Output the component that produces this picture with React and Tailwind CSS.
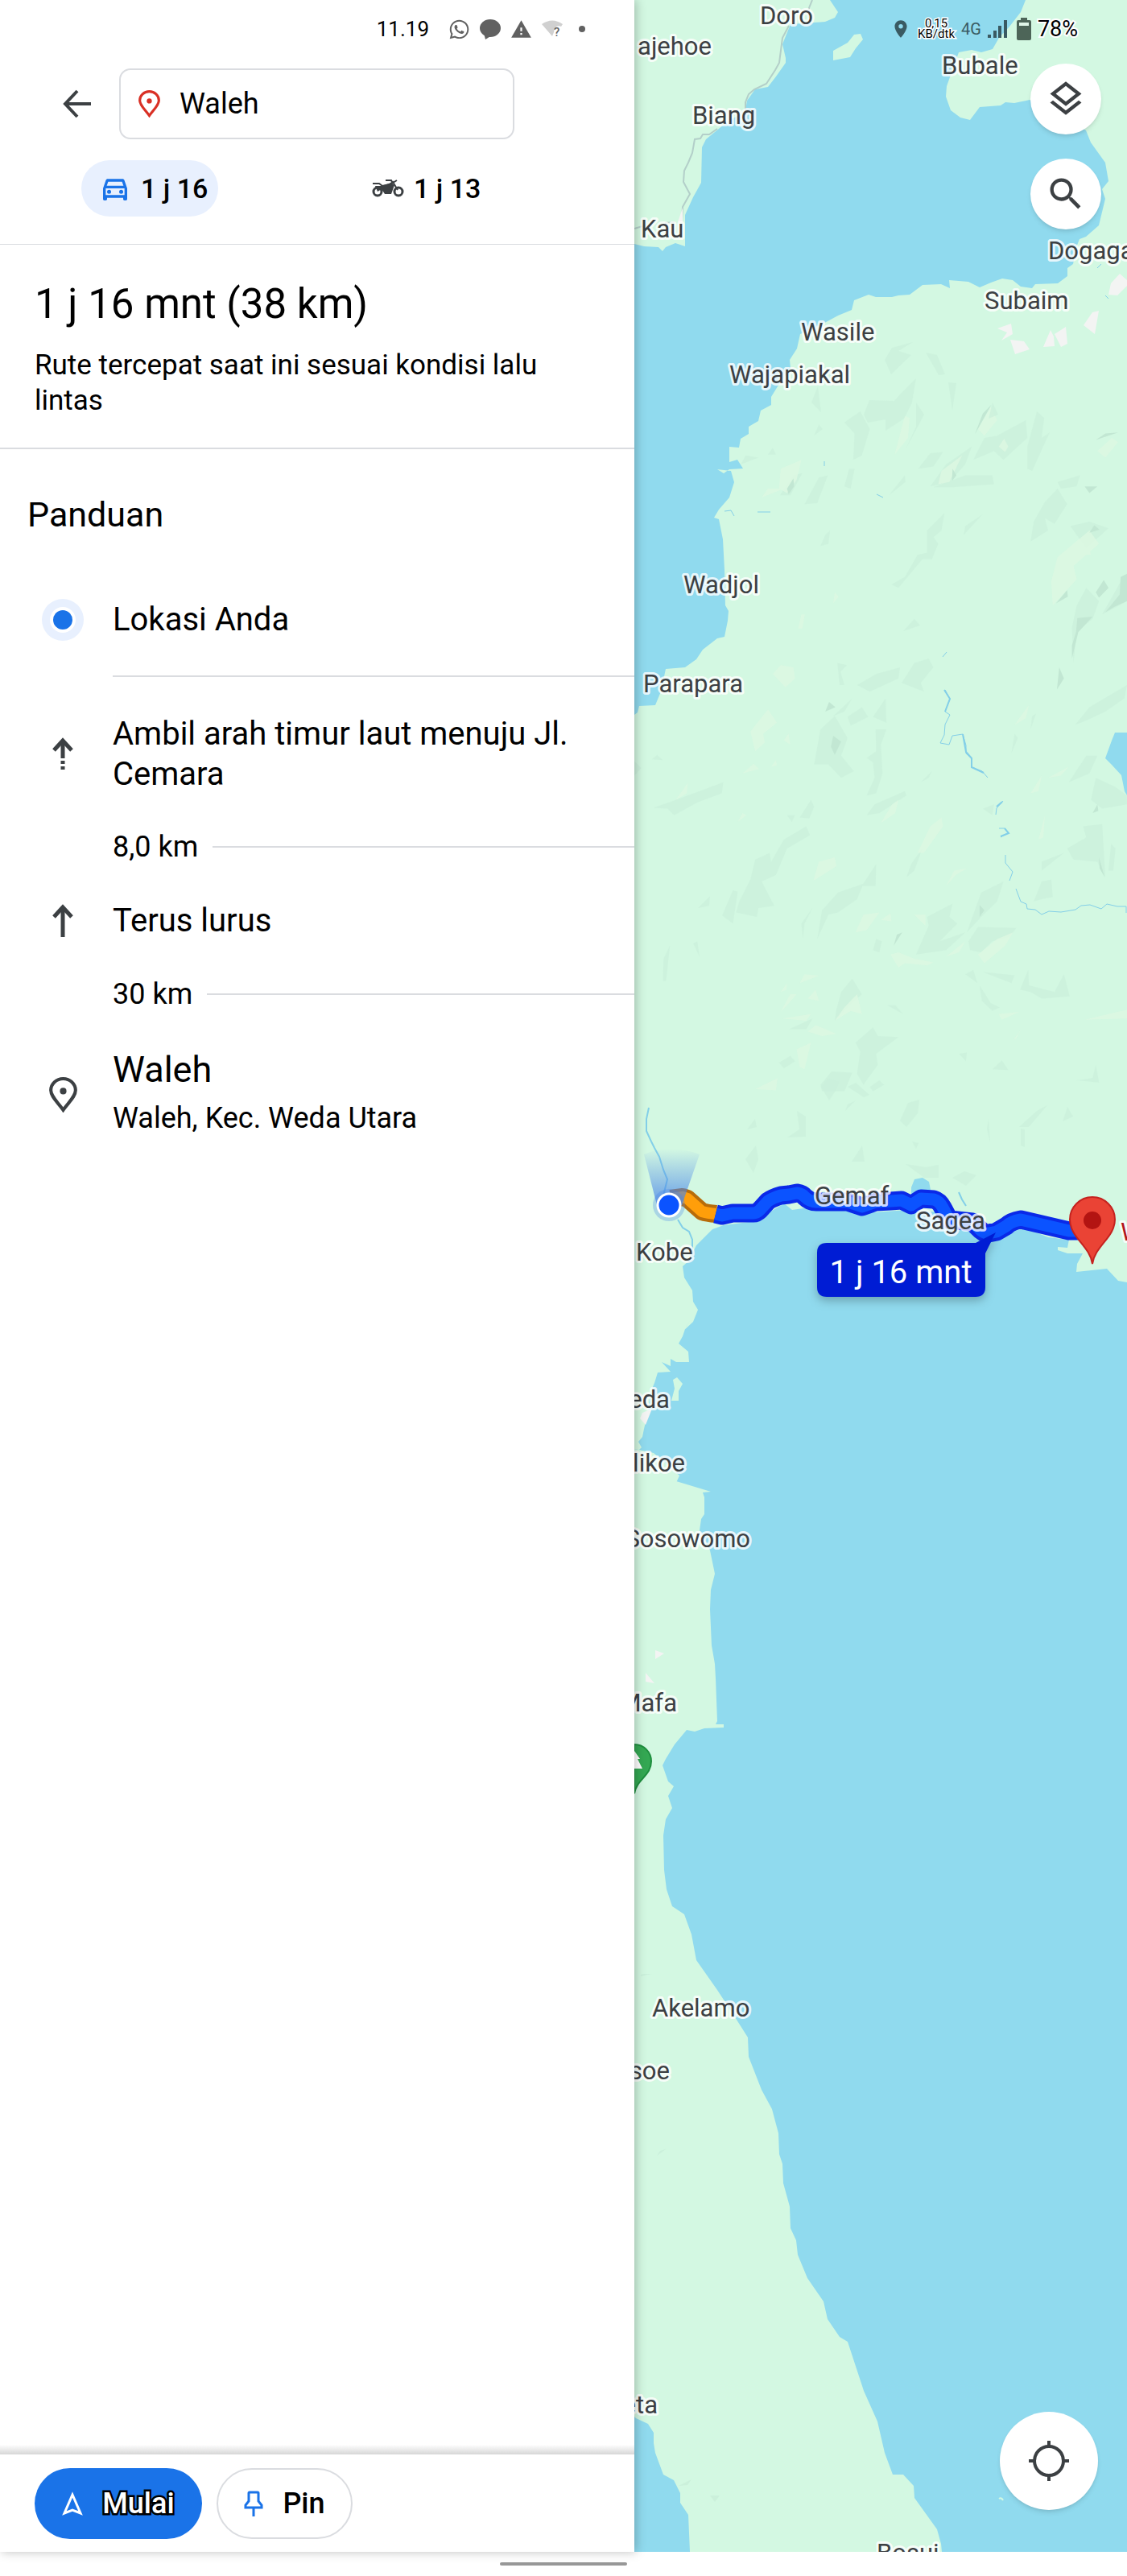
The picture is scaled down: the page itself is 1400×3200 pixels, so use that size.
import { useState } from "react";
import { MdOutlineDirectionsCar, MdOutlineLayers, MdSearch, MdWarning, MdLocationOn } from "react-icons/md";
import { FaWhatsapp } from "react-icons/fa";

const labels = [
  { name: "Doro", x: 156, y: 30 },
  { name: "ajehoe", x: 96, y: 68, end: true },
  { name: "Biang", x: 72, y: 154 },
  { name: "Kau", x: 8, y: 295 },
  { name: "Bubale", x: 382, y: 92 },
  { name: "Dogaga", x: 514, y: 322 },
  { name: "Subaim", x: 435, y: 384 },
  { name: "Wasile", x: 207, y: 423 },
  { name: "Wajapiakal", x: 118, y: 476 },
  { name: "Wadjol", x: 61, y: 737 },
  { name: "Parapara", x: 11, y: 860 },
  { name: "Gemaf", x: 224, y: 1496 },
  { name: "Sagea", x: 350, y: 1527 },
  { name: "Kobe", x: 2, y: 1566 },
  { name: "eda", x: 44, y: 1749, end: true },
  { name: "likoe", x: 63, y: 1828, end: true },
  { name: "Sosowomo", x: 144, y: 1922, end: true },
  { name: "Mafa", x: 53, y: 2126, end: true },
  { name: "Akelamo", x: 22, y: 2505 },
  { name: "soe", x: 44, y: 2583, end: true },
  { name: "eta", x: 29, y: 2998, end: true },
  { name: "Bosui", x: 301, y: 3182 },
];

const ROUTE =
  "M101 1508L109 1510L122 1507L148 1507Q152 1507 156 1503L166 1492Q172 1488 182 1485L192 1484L202 1482Q209 1483 212 1487Q218 1493 226 1493L265 1493L283 1499L300 1493L318 1492L332 1491L344 1497L356 1489L372 1490Q379 1492 383 1500L391 1515L420 1518L426 1524Q434 1533 440 1532L450 1530L462 1523Q468 1517 480 1515L540 1529L555 1529";

function PlacePin({ className }) {
  return (
    <svg viewBox="0 0 34 43" className={className} fill="none" stroke="currentColor" strokeWidth="4">
      <path d="M17 40C11 31 2 24 2 16A15 14 0 0 1 32 16C32 24 23 31 17 40Z" />
      <circle cx="17" cy="17" r="4" fill="currentColor" stroke="none" />
    </svg>
  );
}

function Motorcycle() {
  return (
    <svg viewBox="0 0 40 24" className="h-6 w-10" fill="none" stroke="#3c4043">
      <circle cx="7" cy="16" r="5" strokeWidth="3" />
      <circle cx="33" cy="16" r="5" strokeWidth="3" />
      <path d="M1 6H9L13 9L22 7L26 4L32 14" strokeWidth="2" />
      <path d="M12 9L24 5L28 8L24 19H16L12 13L7 16L4 9Z" fill="#3c4043" stroke="none" />
      <path d="M17 2H24L26 6M26 5L31 2" strokeWidth="2" />
    </svg>
  );
}

function UpArrow({ dashed }) {
  return (
    <svg viewBox="0 0 28 42" className="h-[42px] w-7" fill="none" stroke="#3c4043" strokeWidth="5">
      <path d="M3 16L14 4L25 16" />
      {dashed ? <path d="M14 4V26M14 29V33M14 36V40" /> : <path d="M14 4V41" />}
    </svg>
  );
}

function StatusLeft() {
  return (
    <div className="flex h-9 items-center justify-end pr-[61px] text-[#616161]">
      <time className="mr-6 text-[26px] leading-9 text-black">11.19</time>
      <FaWhatsapp className="mr-3 size-[27px]" />
      <svg viewBox="0 0 26 26" className="mr-3 size-[26px]" fill="currentColor">
        <ellipse cx="13" cy="12" rx="13" ry="11" />
        <path d="M5 18L7 26L15 21Z" />
      </svg>
      <MdWarning className="mr-3 size-[27px]" />
      <svg viewBox="0 0 26 26" className="mr-5 size-[26px]">
        <path d="M0 7Q13-2 26 7L24 10Q17 7 15 17L13 22Z" fill="#d0d0d0" />
        <text x="15" y="22" className="fill-[#616161] text-[15px] font-medium">?</text>
      </svg>
      <span className="size-2 rounded-full bg-[#616161]" />
    </div>
  );
}

function StatusRight() {
  return (
    <div className="flex h-9 items-center justify-end pr-[61px] text-[#3a5a62]">
      <MdLocationOn className="mr-2 size-[26px]" />
      <div className="mr-2 text-center text-[15px] leading-[13px] text-black [paint-order:stroke] [-webkit-text-stroke:3px_white]">
        <p>0,15</p>
        <p>KB/dtk</p>
      </div>
      <span className="mr-2 text-[20px]">4G</span>
      <svg viewBox="0 0 24 22" className="mr-3 h-[22px] w-6" fill="currentColor">
        <path d="M0 18H4V22H0ZM7 13H11V22H7ZM13 7H17V22H13ZM20 0H24V22H20Z" />
      </svg>
      <svg viewBox="0 0 18 28" className="mr-2 h-7 w-[18px]">
        <path d="M5 0H13V3H16Q18 3 18 5V26Q18 28 16 28H2Q0 28 0 26V5Q0 3 2 3H5Z" fill="#4d6558" />
        <path d="M3 6H15V10H3Z" fill="#e0f5e8" />
      </svg>
      <span className="text-[27px] leading-9 text-black [paint-order:stroke] [-webkit-text-stroke:4px_white]">78%</span>
    </div>
  );
}

function Terrain() {
  return (
    <g>
      {/* shaded slopes */}
      <g fill="#cbf0db" fillOpacity="0.7" transform="translate(-8 500) scale(.3954 .5485)">
        <path d="M680 45L730 20L760 60L735 120L708 130L712 70ZM585 75L600 50L612 60ZM355 140L370 120L410 125ZM440 118L455 103L465 118ZM478 210L520 165L548 160L510 210ZM555 230L600 170L628 165L595 228ZM680 190L695 150L712 150L700 195Z" />
        <path d="M912 150L950 115L990 112L960 145ZM950 190L1000 140L1040 120L1080 100L1060 140L1010 180ZM1085 130L1120 80L1160 75L1250 40L1255 80L1180 130L1150 110ZM1255 100L1285 20L1308 35L1300 80L1325 68L1270 155L1255 150ZM960 192L1060 165L1145 165L1150 185L1020 192ZM820 210L870 165L872 180Z" />
        <path d="M1275 270L1310 225L1350 195L1380 230L1340 275L1310 262L1320 290L1265 315ZM1055 300L1060 280L1115 253ZM940 290L995 250L985 290L960 305L975 320L955 355L925 355L850 420L828 412L870 395L910 345L940 340ZM605 325L620 300L635 290L630 320ZM1350 180L1420 165L1410 190L1360 195ZM1390 280L1450 270L1510 285L1440 330Z" />
        <path d="M865 518L900 490L918 505ZM860 635L900 590L945 580L960 600L920 635L930 655ZM658 590L688 595L668 610L680 640L665 640ZM720 640L780 615L855 600L850 625L760 655ZM770 712L810 670L812 725ZM645 710L705 670L680 700ZM605 740L650 710L690 760L670 800L710 835L670 850L630 820L585 820ZM690 712L735 690L755 712L700 732ZM778 740L812 740L795 775L800 840L780 885L750 890L775 850L770 815L750 805L780 790Z" />
        <path d="M80 918L150 900L300 860L295 885L220 905L145 935L125 920ZM75 808L92 798L110 810ZM20 812L42 828L20 845ZM500 935L525 935L515 950ZM540 940L575 900L585 915L570 942ZM385 1080L400 1035L445 1020L450 1040L490 990L560 960L572 980L500 1010L465 1070L420 1085L460 1140L410 1145L405 1165L340 1155L350 1130ZM296 1162L330 1105L345 1108L330 1180Z" />
        <path d="M595 1215L610 1150L660 1110L740 1090L720 1125L660 1155L630 1160ZM545 1180L580 1145L555 1180L550 1215ZM770 1240L780 1215L798 1220L790 1245ZM905 1250L945 1185L940 1165L1020 1135L1010 1165L1035 1180L980 1220L1060 1200L1000 1240ZM750 935L775 910L870 880L875 890L790 930ZM735 1095L780 1045L778 1095ZM875 1075L890 1045L925 1010L900 1060Z" />
        <path d="M1065 1200L1110 1110L1180 1085L1160 1130L1110 1165ZM1070 1220L1100 1188L1220 1190L1200 1210L1145 1220L1110 1245L1075 1240ZM1380 1010L1440 985L1430 960L1490 955L1500 1075L1475 1040L1400 1035ZM1510 1060L1518 1000L1532 1010L1525 1060ZM1300 1040L1370 1020L1300 1060ZM1275 1130L1300 1085L1330 1080L1335 1120L1300 1125Z" />
        <path d="M1385 860L1440 800L1475 800L1450 840ZM1405 730L1450 690L1568 640L1560 670L1500 700L1440 720ZM1400 590L1395 510L1410 460L1440 420L1480 450L1460 490L1410 520ZM1490 480L1560 390L1568 450ZM1455 900L1470 850L1530 870L1568 890V910L1490 920Z" />
        <path d="M655 1375L670 1335L705 1305L735 1340L690 1370L650 1400ZM715 1450L770 1415L785 1435L850 1437L780 1475L785 1500L740 1545L720 1520L730 1470ZM605 1545L640 1515L705 1518L680 1560H610ZM475 1495L510 1480L525 1492L490 1508ZM1232 1330L1258 1285L1260 1320L1340 1335L1370 1295L1388 1345L1300 1350L1265 1335ZM1105 1320L1140 1360L1168 1370L1145 1378L1112 1355ZM1060 1295L1085 1285L1098 1315ZM505 1420L580 1395L560 1420ZM1145 1510L1175 1490L1195 1512ZM1040 1475L1065 1472L1062 1492ZM1410 1535L1460 1530L1470 1500L1480 1540ZM110 1310L112 1260L132 1230L120 1310ZM205 1225L218 1220L225 1255ZM760 1550L790 1535L805 1545L770 1560Z" />
        <path d="M1205 795L1215 750L1225 760ZM1265 740L1270 710L1282 705ZM220 1145L258 1118L255 1140ZM920 860L955 835L945 850ZM1115 920L1150 910L1145 935ZM815 1365L840 1365L865 1385ZM1115 1290L1215 1297L1205 1315Z" />
      </g>
      {/* sunlit slopes */}
      <g fill="#ddf8e2" fillOpacity="0.8" transform="translate(-8 500) scale(.3954 .5485)">
        <path d="M475 195L480 150L545 130L530 175L500 205ZM838 118L870 30L885 35L880 80ZM1100 60L1140 10L1160 40L1120 75ZM1165 100L1182 82L1195 100L1185 112ZM975 185L985 155L1050 120L1010 180ZM420 215L440 195L490 195ZM1475 110L1520 80L1540 90L1500 125ZM1330 405L1350 350L1450 290L1480 320L1400 370L1410 400L1335 460ZM1400 345L1440 310L1455 345Z" />
        <path d="M455 615L480 595L520 600L525 625L495 645ZM385 745L440 695L468 725L425 750L430 770L400 790ZM360 840L395 818L412 830ZM450 825L465 810L468 822ZM535 512L545 480L556 480L548 512ZM645 455L650 430L662 440ZM150 900L188 862L185 885ZM345 950L360 930L372 935ZM490 765L505 750L510 775Z" />
        <path d="M910 1020L950 960L985 940L990 960L930 1020ZM795 952L830 910L850 900L840 930ZM583 1082L600 1040L650 1030L655 1050L590 1080ZM715 1200L740 1160L790 1155L750 1195ZM825 1250L850 1245L900 1260L960 1268L940 1275L870 1270L850 1280ZM1100 1250L1160 1215L1210 1200L1185 1230L1120 1270ZM1000 1095L1025 1060L1065 1055L1030 1070ZM795 1172L825 1157L828 1175ZM900 1160L935 1160L935 1185ZM1000 1255L1060 1220L1040 1245Z" />
        <path d="M650 1400L680 1370L720 1340L735 1385L700 1378ZM540 1315L555 1295L600 1298ZM480 1380L510 1340L530 1340L500 1365ZM485 1395L575 1385L560 1400ZM565 1350L590 1330L600 1355ZM565 1425L590 1410L655 1430L610 1435ZM530 1465L575 1450L555 1510L540 1505ZM400 1555L470 1530L465 1558ZM1165 1385L1230 1380L1175 1398ZM1435 1398L1568 1375V1395ZM1210 1445L1235 1420L1220 1440ZM480 1335L500 1315L498 1330ZM1290 990L1310 935L1305 985ZM1265 885L1300 845L1290 880ZM1320 850L1385 825L1360 845ZM1215 730L1260 685L1250 715Z" />
      </g>
      <g fill="#c2e7d3" transform="translate(-8 500) scale(.3954 .5485)">
        <path d="M500 195L520 172L522 190L505 208ZM1090 72L1115 25L1142 5ZM1018 178L1020 150L1032 165ZM1470 85L1500 70L1540 68ZM1435 190L1475 190L1450 205ZM1450 295L1465 278L1482 288ZM1470 430L1495 402L1510 420L1480 442ZM1408 520L1412 488L1460 485L1415 520L1395 580L1395 550ZM1500 475L1545 435L1548 395L1568 388V450L1530 462ZM620 700L632 678L652 690ZM638 780L645 755L670 768L650 798ZM1348 650L1355 600L1370 625ZM1460 930L1475 910L1478 925ZM1480 1030L1498 1075L1482 1055ZM835 1230L845 1205L862 1200ZM1105 1165L1105 1138L1120 1150ZM1345 455L1380 425L1382 440Z" />
      </g>
      <g fill="#cbf0db" fillOpacity="0.7">
        <path d="M311 447L320 432L346 425L328 436L344 441L319 465ZM362 438L376 441L386 465L378 466ZM312 510L330 490L350 470L345 500L335 520L312 535ZM337 558L350 530L350 500L360 515ZM220 500L228 480L232 512ZM285 515L292 497L322 498L318 520L290 525ZM390 475L400 476L395 510ZM440 520L445 500L452 515Z" />
        <path d="M232 1350L240 1340L255 1343L250 1355L242 1367ZM265 1350L275 1345L292 1360L285 1363ZM330 1392L340 1370L354 1366L352 1383L338 1400ZM202 1380L213 1387L213 1412L190 1413L205 1403ZM140 1403L150 1390L152 1400ZM138 1440L151 1423L154 1440L148 1457ZM270 1443L283 1423L286 1443ZM337 1446L362 1450L378 1447L378 1463L360 1463ZM395 1463L410 1455L425 1460L412 1473ZM478 1400L500 1380L513 1373L490 1400ZM538 1375L545 1387L532 1393ZM262 1380L275 1367L265 1372ZM438 1402L440 1390L442 1420ZM480 1402L485 1403V1425L480 1423ZM345 1418L353 1420L350 1427Z" />
      </g>
      <path d="M8 2453L12 2452H22L8 2455ZM55 3088L71 3080L66 3087ZM94 3100H106L100 3108ZM28 2678L40 2669L32 2672Z" fill="#cbf0db" />
    </g>
  );
}

function RouteMap() {
  return (
    <svg
      viewBox="0 0 612 3170"
      preserveAspectRatio="xMinYMin slice"
      className="absolute inset-0 size-full"
      role="img"
      aria-label="Peta rute ke Waleh"
    >
      <defs>
        <linearGradient id="beam" x1="0" y1="1" x2="0" y2="0">
          <stop offset="0" stopColor="#4a86e8" stopOpacity="0.8" />
          <stop offset="1" stopColor="#4a86e8" stopOpacity="0" />
        </linearGradient>
        <filter id="lift" x="-20%" y="-20%" width="140%" height="160%">
          <feDropShadow dx="0" dy="5" stdDeviation="6" floodOpacity="0.25" />
        </filter>
      </defs>
      <rect width="612" height="3170" fill="#90daee" />

      <g fill="#d3f8e2">
        <path d="M0 0H243L253 15L249 22L237 27L223 28L194 30L184 55L188 72V78L176 95L166 108L150 111L140 125L138 137L111 155L89 173L84 183L83 227L73 245L63 267V306L51 302L39 307L35 312L30 307L12 306L0 303Z" />
        <path d="M273 43L281 42L284 49L275 60L268 71L247 75V63L265 53Z" />
        <path d="M612 0H486L480 15L466 33L453 47L445 61L431 65L419 62L403 65L393 93L388 107L387 120L393 137L405 146L417 149L429 133L455 131L461 127L472 128L491 124L526 143L561 162L567 177L585 202L589 225L581 235L585 247L577 280L561 294L553 297L549 307L545 328L538 333V343L526 352L498 353L494 358L480 356L470 348L457 346L443 351L429 357L415 350L391 348L392 358L381 353L358 354L346 363L342 366L328 367L320 369H300L291 366L273 373L270 385L253 392L229 405L206 415L202 433L193 447L194 458L178 480L170 493V503L157 510L154 523L142 530V539L132 545L130 556L118 555V574L128 571L135 582L118 583L111 588L103 583L120 585L124 599L118 618L105 633L99 643L105 645L110 670L112 708L113 752L117 759L116 771L112 791L103 793L85 807L77 819L63 829L39 831L33 859L26 876L6 877L4 885L0 888V1840H52L95 1853L85 1854L87 1860V1881L83 1887L81 1901L94 1926L100 1955L95 1975L94 1999L96 2044L100 2067L101 2085L103 2138L101 2142H111V2146L87 2147L75 2151L65 2149L50 2167L39 2185L35 2193L42 2213L49 2219L42 2231L47 2246L39 2260L36 2280L37 2323L40 2347L47 2368L62 2378L71 2403L77 2435L103 2472L122 2501L141 2531L142 2555L158 2596L171 2620L179 2650L180 2676L184 2688L185 2712L193 2741L194 2768L201 2783L203 2801L215 2830L235 2859L240 2881L255 2903L265 2909L285 2970L302 3008L311 3047L321 3074H334L347 3088L348 3103L376 3142L381 3160L382 3170H69L67 3124L57 3109V3097L49 3081L36 3074L26 3047L24 3035V3022L17 3011L2 3004L0 3002V1840L0 1800L24 1805L5 1802L9 1798L5 1791L10 1785L12 1775L17 1754L20 1730L25 1718L29 1705L45 1704L34 1692L45 1697V1688L52 1692L68 1692L67 1679L55 1669L60 1660L64 1648L70 1640L59 1655L73 1642L79 1627L73 1617L72 1603L62 1587L60 1573L67 1567L77 1547L87 1537L97 1527L111 1522L150 1517L166 1507L186 1495L196 1503L217 1500H265L283 1507L340 1503L393 1507L411 1525L435 1537L459 1530L480 1523L514 1537L540 1540L538 1550L526 1549V1553L538 1557H557L550 1570L549 1580L587 1576L601 1591L612 1593Z" />
        <path d="M48 1714L53 1711L60 1719L55 1728V1740H46L50 1725Z" />
        <path d="M0 1800L24 1805L40 1818L56 1833L52 1842H0Z" />
      </g>
      <path d="M453 3104Q456 3102 458 3106" fill="none" stroke="#d3f8e2" strokeWidth="2" />
      <Terrain />

      {/* lakes and rivers */}
      <g fill="#90daee">
        <path d="M612 910H597L593 920L585 942L593 950L605 963L609 983L612 988Z" />
        <path d="M344 1475L348 1465L358 1463L366 1468L368 1478L352 1485L344 1490Z" />
      </g>
      <g fill="none" stroke="#83cfe8" strokeWidth="2">
        <path d="M386 857L392 868L386 884L392 888L386 900L385 913L380 923L391 925L395 914L408 912L412 926V936L419 942V953L432 958L439 966M449 1012L450 1004L458 995M455 1040L465 1034L460 1029H453M461 1062V1072L470 1083L466 1094M474 1104L480 1120L487 1123L488 1129L498 1130L506 1136L515 1132L530 1133L548 1130L555 1125L566 1124L580 1129L587 1123L600 1126H611V1134" strokeWidth="1" />
        <path d="M385 857L392 868L386 884M408 912L412 934L419 942V953L434 960M450 1002L457 996M455 1039L465 1035L460 1029" />
        <path d="M18 1376L15 1390V1405L21 1418L25 1426L31 1437L36 1453L41 1465L36 1485M54 1515L60 1525L68 1530L72 1540V1560M403 1481L407 1490L412 1498" />
        <path d="M112 635L120 634L124 641M153 636H169M236 579V573M301 614L309 618M575 333L580 328M585 367L589 371M383 816L388 810" strokeWidth="1" />
      </g>
      <g fill="none" stroke="#b3cfc9" strokeWidth="2">
        <path d="M221 0L217 10V22M192 32L184 47L180 78L175 87L164 104L149 111L142 117L138 127V137M103 160L93 167H85L82 172L75 173L72 190L67 202L62 212L61 226L69 241L60 257L59 275M50 276L38 277M10 281L0 284" />
      </g>
      <g fill="#f3f4f3">
        <path d="M60 258L54 276H60ZM603 340L612 348V355L600 367L589 366L592 352ZM569 388L577 386L572 415L558 404ZM451 408L468 402L470 415L456 423L463 413ZM467 422L484 424L491 434L473 440ZM508 431L517 410L521 418L522 430ZM522 415L536 406L538 427L530 431Z" />
        <path d="M10 1755L22 1750L14 1770L7 1762ZM26 2050L37 2054L26 2061ZM14 2078L25 2091L14 2089Z" />
      </g>

      {/* route */}
      <g fill="none" strokeLinejoin="round">
        <path d="M45 1489L60 1487L66 1489L84 1505Q90 1507 102 1508" stroke="#b86c0a" strokeWidth="22" />
        <path d="M45 1489L60 1487L66 1489L84 1505Q90 1507 103 1508" stroke="#ff9e0a" strokeWidth="14" />
        <path d={ROUTE} stroke="#0a29e8" strokeWidth="23" />
        <path d={ROUTE} stroke="#0b53ff" strokeWidth="15" />
      </g>
      <path d="M28 1497L12 1434Q44 1420 81 1434L59 1497Z" fill="url(#beam)" />
      <circle cx="43" cy="1497" r="20" fill="#4a86e8" fillOpacity="0.3" />
      <circle cx="43" cy="1497" r="14" fill="#0b53ff" stroke="#fff" strokeWidth="3" />

      <g className="fill-[#3c4043] text-[31px]" stroke="#fff" strokeOpacity="0.8" strokeWidth="6" strokeLinejoin="round" paintOrder="stroke">
        {labels.map((l) => (
          <text key={l.name} x={l.x} y={l.y} textAnchor={l.end ? "end" : "start"}>
            {l.name}
          </text>
        ))}
        <text x="604" y="1541" className="fill-[#b3141b]">Waleh</text>
      </g>

      <g filter="url(#lift)">
        <path d="M239 1544H424L449 1531L436 1557V1599Q436 1611 424 1611H239Q227 1611 227 1599V1556Q227 1544 239 1544Z" fill="#041fd4" />
      </g>
      <text x="331" y="1594" textAnchor="middle" className="fill-white text-[40px]">1 j 16 mnt</text>

      <path d="M569 1570C566 1548 541 1537 541 1515A28 28 0 0 1 597 1515C597 1537 572 1548 569 1570Z" fill="#ea4335" stroke="#c5221f" strokeWidth="2" />
      <circle cx="569" cy="1516" r="11" fill="#b31412" />

      <path d="M0 2228C3 2210 21 2206 21 2188A21 21 0 0 0 0 2167Z" fill="#34a853" stroke="#1e8e3e" strokeWidth="2" />
      <path d="M0 2175L7 2185H4L10 2197H0Z" fill="#fff" />
    </svg>
  );
}

function Distance({ children }) {
  return (
    <div className="flex h-[50px] items-center gap-[18px] pl-[140px]">
      <span className="text-[36px] leading-[50px]">{children}</span>
      <span className="h-0.5 flex-1 bg-[#dadce0]" />
    </div>
  );
}

function Step({ icon, children }) {
  return (
    <div className="flex items-center">
      <span className="flex w-[140px] shrink-0 items-center pl-[52px]">
        <span className="flex w-[52px] justify-center">{icon}</span>
      </span>
      <div className="pr-14 text-[40px] leading-[50px]">{children}</div>
    </div>
  );
}

export default function App() {
  const [destination, setDestination] = useState("Waleh");

  return (
    <div className="flex min-h-screen flex-col bg-white font-['Roboto',sans-serif] text-black">
      <main className="flex flex-1">
        <section className="relative z-10 flex min-w-0 flex-[788] flex-col bg-white shadow-[2px_0_12px_rgba(0,0,0,0.25)]">
          <header className="border-b border-[#dadce0] pt-[18px] pb-[34px]">
            <StatusLeft />
            <div className="mt-[31px] flex items-center pl-[76px]">
              <button aria-label="Kembali" className="mr-8">
                <svg viewBox="0 0 40 40" className="size-10" fill="none" stroke="#3c4043" strokeWidth="4">
                  <path d="M37 20H6M20 4L5 20L20 36" />
                </svg>
              </button>
              <label className="mr-[149px] flex h-[88px] min-w-0 flex-1 items-center rounded-[14px] border-2 border-[#dadce0] pl-[22px]">
                <PlacePin className="mr-6 h-[34px] w-[27px] shrink-0 text-[#d93025]" />
                <input
                  aria-label="Tujuan"
                  className="w-full min-w-0 bg-transparent text-[36px] outline-none"
                  value={destination}
                  onChange={(e) => setDestination(e.target.value)}
                />
              </label>
            </div>
            <nav className="mt-[26px] flex h-[70px] items-center pl-[101px] text-[34px] font-medium">
              <button className="mr-[191px] flex h-[70px] w-[170px] items-center gap-3 rounded-full bg-[#e8f0fe] pl-[22px]">
                <MdOutlineDirectionsCar className="size-10 text-[#1a73e8]" />
                1 j 16
              </button>
              <button className="flex items-center gap-3">
                <Motorcycle />
                1 j 13
              </button>
            </nav>
          </header>

          <div className="border-b-2 border-[#dadce0] px-[43px] pt-10 pb-9">
            <h1 className="text-[51px] leading-[68px]">1 j 16 mnt (38 km)</h1>
            <p className="mt-5 text-[35px] leading-11">Rute tercepat saat ini sesuai kondisi lalu lintas</p>
          </div>

          <h2 className="mt-14 pl-[34px] text-[43px] leading-[50px]">Panduan</h2>

          <div className="mt-20">
            <Step
              icon={
                <span className="flex size-[52px] items-center justify-center rounded-full bg-[#e8f0fe]">
                  <span className="size-8 rounded-full border-4 border-white bg-[#1a73e8]" />
                </span>
              }
            >
              Lokasi Anda
            </Step>
            <div className="mt-[43px] ml-[140px] h-0.5 bg-[#dadce0]" />
            <div className="mt-[46px]">
              <Step icon={<UpArrow dashed />}>Ambil arah timur laut menuju Jl. Cemara</Step>
            </div>
            <div className="mt-10">
              <Distance>8,0 km</Distance>
            </div>
            <div className="mt-[42px]">
              <Step icon={<UpArrow />}>Terus lurus</Step>
            </div>
            <div className="mt-[41px]">
              <Distance>30 km</Distance>
            </div>
            <div className="mt-10">
              <Step icon={<PlacePin className="h-11 w-[35px] text-[#3c4043]" />}>
                <p className="text-[45px] leading-[58px]">Waleh</p>
                <p className="text-[36px] leading-[62px]">Waleh, Kec. Weda Utara</p>
              </Step>
            </div>
          </div>

          <div className="mt-auto h-3 bg-linear-to-b from-white to-[#d6d6d6]" />
          <footer className="flex gap-[18px] px-[43px] pt-[17px] pb-4 text-[36px] font-medium">
            <button className="flex h-[88px] w-[208px] items-center justify-center gap-6 rounded-full bg-[#1a73e8] text-white">
              <svg viewBox="0 0 26 32" className="h-8 w-[26px]" fill="none" stroke="currentColor" strokeWidth="3">
                <path d="M13 5L23 28L13 24L3 28Z" />
              </svg>
              <span className="[paint-order:stroke] [-webkit-text-stroke:5px_black]">Mulai</span>
            </button>
            <button className="flex h-[88px] w-[169px] items-center justify-center gap-6 rounded-full border-2 border-[#dadce0]">
              <svg viewBox="0 0 24 32" className="h-8 w-6" fill="none" stroke="#1a73e8" strokeWidth="3">
                <path d="M7 2H17Q18 2 18 3V13L22 18V21H2V18L6 13V3Q6 2 7 2ZM12 21V32" />
              </svg>
              Pin
            </button>
          </footer>
        </section>

        <section className="relative min-w-0 flex-[612] overflow-hidden">
          <RouteMap />
          <div className="absolute inset-0 flex flex-col pt-[18px]">
            <StatusRight />
            <div className="mt-[25px] flex flex-1 flex-col items-end pr-8 pb-[52px]">
              <button aria-label="Lapisan" className="mb-[30px] flex size-[88px] items-center justify-center rounded-full bg-white shadow-md">
                <MdOutlineLayers className="size-[52px] text-[#3c4043]" />
              </button>
              <button aria-label="Telusuri" className="flex size-[88px] items-center justify-center rounded-full bg-white shadow-md">
                <MdSearch className="size-[52px] text-[#3c4043]" />
              </button>
              <button aria-label="Lokasi saya" className="mt-auto mr-1 flex size-[122px] items-center justify-center rounded-full bg-white shadow-md">
                <svg viewBox="0 0 50 50" className="size-[50px]" fill="none" stroke="#3c4043" strokeWidth="4">
                  <circle cx="25" cy="25" r="18" />
                  <path d="M25 0V8M25 42V50M0 25H8M42 25H50" />
                </svg>
              </button>
            </div>
          </div>
        </section>
      </main>
      <div className="flex h-[30px] shrink-0 items-center justify-center">
        <span className="h-1 w-[158px] rounded-full bg-[#979797]" />
      </div>
    </div>
  );
}
